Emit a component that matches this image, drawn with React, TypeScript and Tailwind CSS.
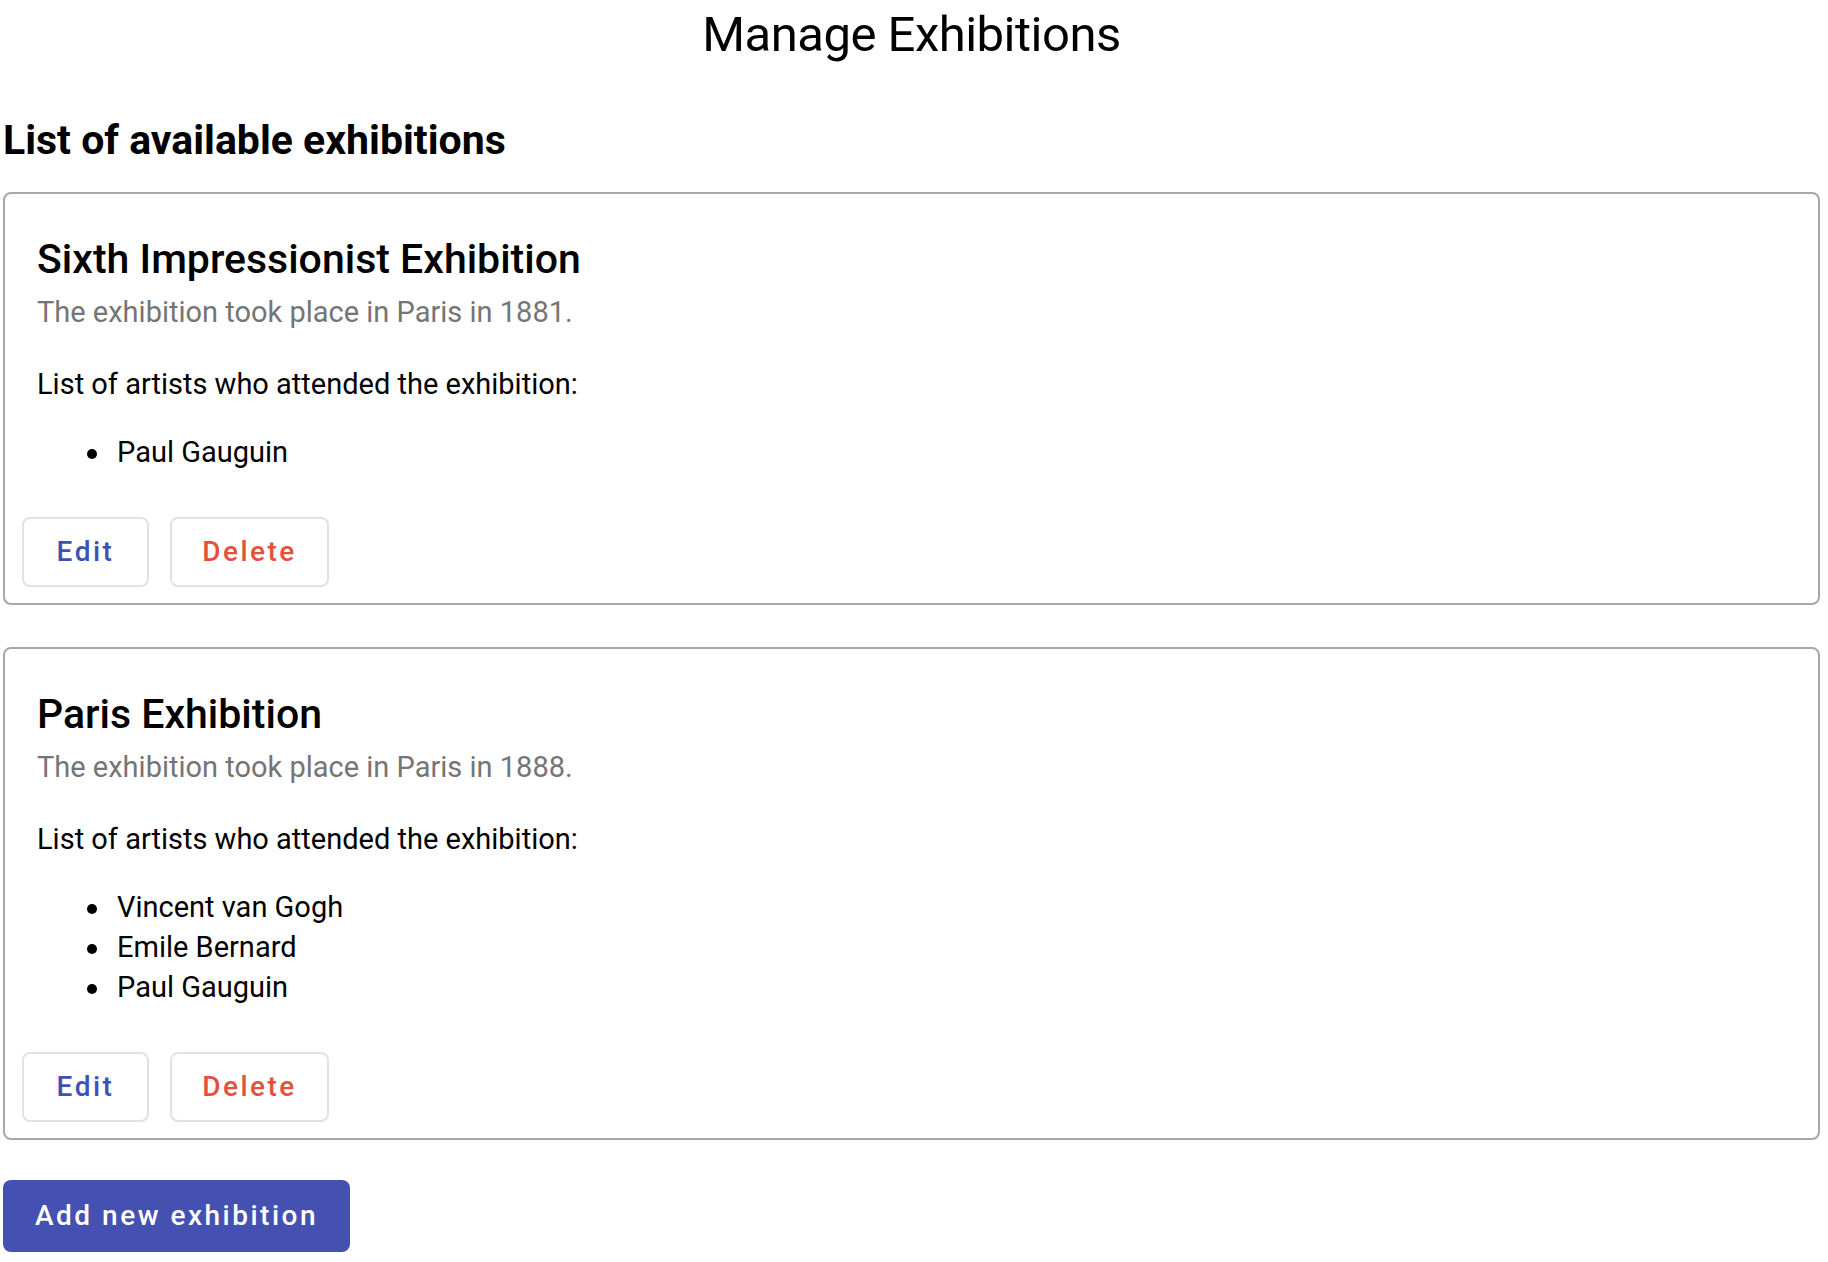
import React from "react";

type Exhibition = {
  title: string;
  year: number;
  artists: string[];
};

const exhibitions: Exhibition[] = [
  { title: "Sixth Impressionist Exhibition", year: 1881, artists: ["Paul Gauguin"] },
  { title: "Paris Exhibition", year: 1888, artists: ["Vincent van Gogh", "Emile Bernard", "Paul Gauguin"] },
];

function ExhibitionCard({ ex, first }: { ex: Exhibition; first: boolean }) {
  return (
    <div
      className={`${first ? "mt-[32px]" : "mt-[42px]"} border-2 border-[#a8a8a8] rounded-[8px] bg-white pb-[16px]`}
    >
      <div className="pl-[32px] pt-[43px]">
        <h2 className="text-[41px] leading-[44px] font-medium text-black">{ex.title}</h2>
        <p className="mt-[11px] text-[29px] leading-[40px] text-[#757575]">
          The exhibition took place in Paris in {ex.year}.
        </p>
        <p className="mt-[32px] text-[29px] leading-[40px] text-black">
          List of artists who attended the exhibition:
        </p>
        <ul className="mt-[28px] pl-[50px] text-[29px] leading-[40px] text-black">
          {ex.artists.map((a) => (
            <li key={a} className="flex items-start">
              <span className="mt-[17px] mr-[20px] w-[10px] h-[10px] rounded-full bg-black shrink-0" />
              <span>{a}</span>
            </li>
          ))}
        </ul>
      </div>
      <div className="mt-[45px] flex gap-[21px] pl-[17px]">
        <button className="w-[127px] h-[70px] border-2 border-[#e2e2e2] rounded-[8px] bg-white text-[28px] font-medium tracking-[2.5px] text-[#3f51b5]">
          Edit
        </button>
        <button className="w-[159px] h-[70px] border-2 border-[#e2e2e2] rounded-[8px] bg-white text-[28px] font-medium tracking-[2.5px] text-[#e4503e]">
          Delete
        </button>
      </div>
    </div>
  );
}

export default function App() {
  return (
    <div className="min-h-screen bg-white font-[Roboto,sans-serif] pl-[3px] pr-[8px] pb-[10px]">
      <h1 className="pt-[5px] text-center text-[49px] leading-[60px] font-normal tracking-[-0.5px] text-black">
        Manage Exhibitions
      </h1>
      <h3 className="mt-[55px] text-[41px] leading-[40px] font-bold text-black">
        List of available exhibitions
      </h3>
      {exhibitions.map((ex, i) => (
        <ExhibitionCard key={ex.title} ex={ex} first={i === 0} />
      ))}
      <button className="mt-[40px] w-[347px] h-[72px] rounded-[8px] bg-[#4551b1] text-white text-[28px] font-medium tracking-[2.5px]">
        Add new exhibition
      </button>
    </div>
  );
}
